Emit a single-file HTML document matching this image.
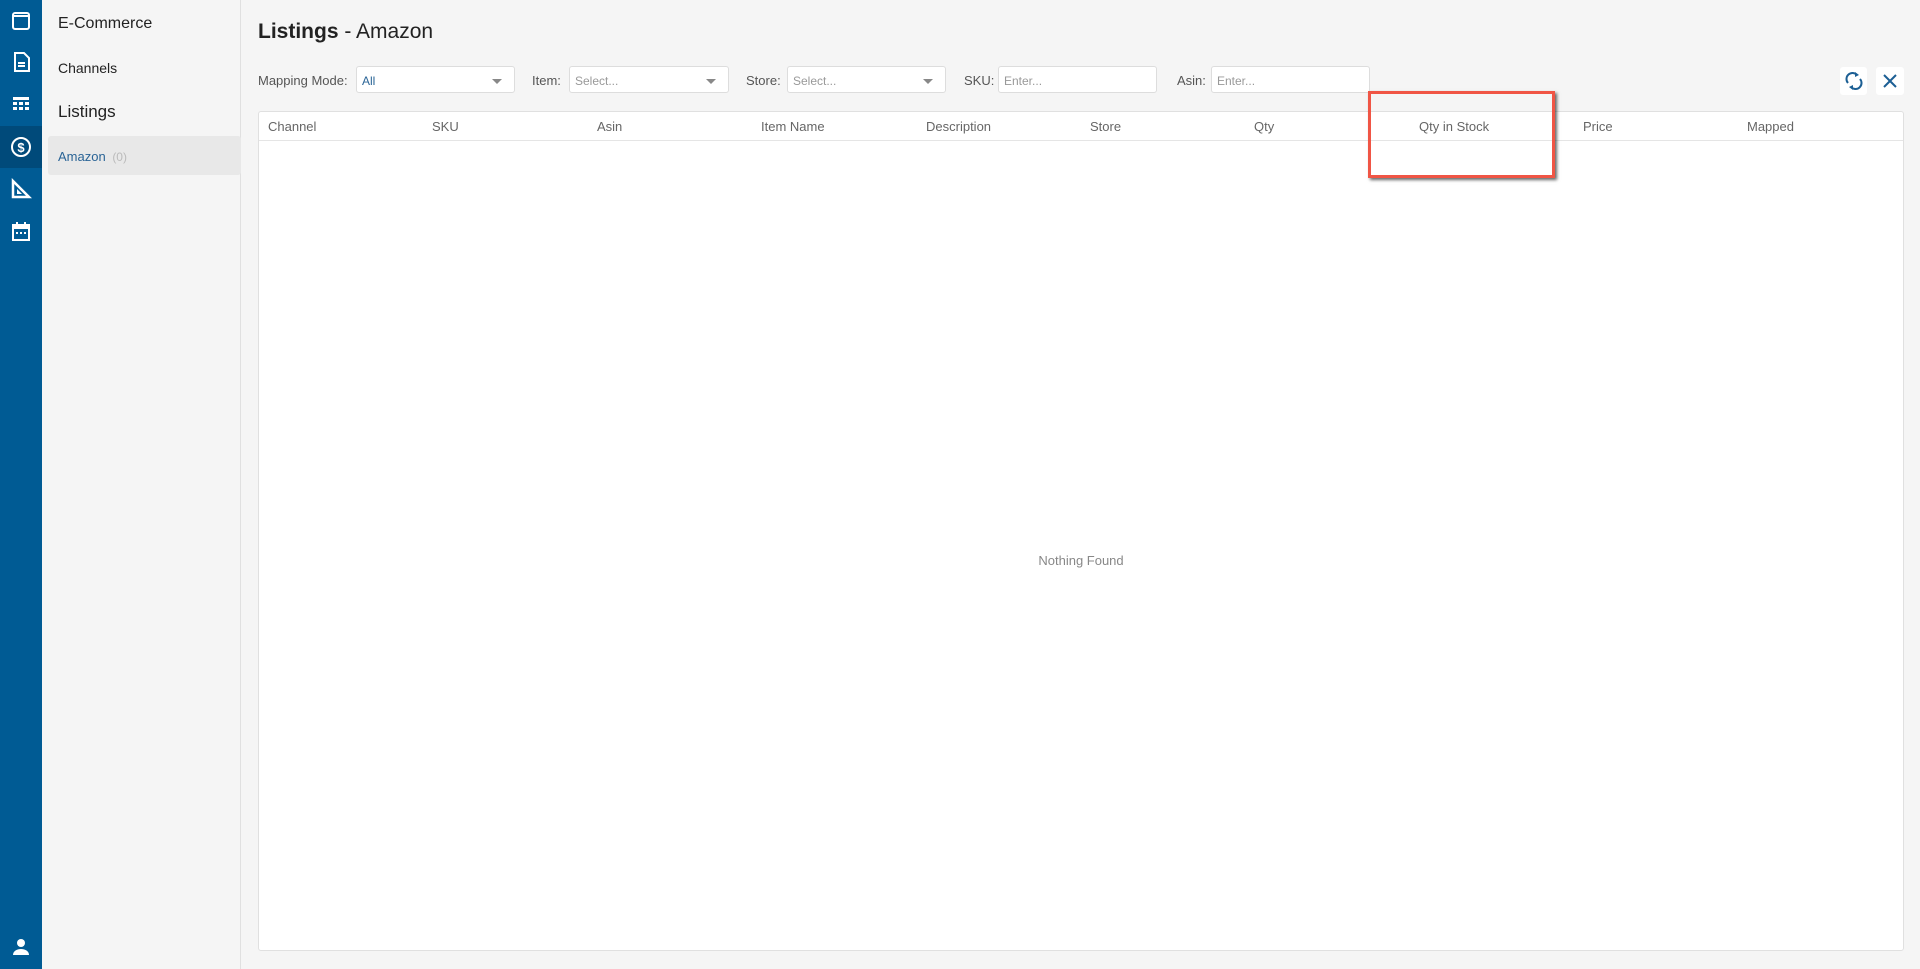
<!DOCTYPE html>
<html><head><meta charset="utf-8"><style>
*{box-sizing:border-box;margin:0;padding:0}
body{width:1920px;height:969px;background:#f5f5f5;font-family:"Liberation Sans",sans-serif;position:relative;overflow:hidden;color:#222}
.abs{position:absolute}
.bar{left:0;top:0;width:42px;height:969px;background:#005b94}
.act{left:0;top:126px;width:42px;height:42px;background:#004a7a}
.ico{position:absolute;left:10px;width:22px;height:22px}
.panel{left:42px;top:0;width:199px;height:969px;background:#f5f5f5;border-right:1px solid #e0e0e0}
.lbl{font-size:13px;color:#555}
.sel{background:#fff;border:1px solid #ddd;border-radius:3px;height:27px;top:66px;font-size:12px;padding:7px 5px;color:#999}
.sel .car{position:absolute;right:12px;top:12px;border-left:5px solid transparent;border-right:5px solid transparent;border-top:5px solid #888}
.th{position:absolute;top:7px;font-size:13px;color:#666}
</style></head><body>
<div class="abs bar"></div>
<div class="abs act"></div>
<svg class="ico" style="top:10px" viewBox="0 0 22 22"><rect x="3" y="3" width="16" height="16" rx="2" fill="none" stroke="#fff" stroke-width="2"/><line x1="3" y1="6" x2="19" y2="6" stroke="#fff" stroke-width="2"/></svg>
<svg class="ico" style="top:51px" viewBox="0 0 22 22"><path d="M5 2h9l5 5v13H5z" fill="none" stroke="#fff" stroke-width="2"/><path d="M8 12h7M8 15h7" stroke="#fff" stroke-width="2"/></svg>
<svg class="ico" style="top:93px" viewBox="0 0 22 22"><g fill="#fff"><rect x="3" y="4" width="16" height="3"/><rect x="3" y="9" width="4" height="3"/><rect x="9" y="9" width="4" height="3"/><rect x="15" y="9" width="4" height="3"/><rect x="3" y="14" width="4" height="3"/><rect x="9" y="14" width="4" height="3"/><rect x="15" y="14" width="4" height="3"/></g></svg>
<svg class="ico" style="top:136px" viewBox="0 0 22 22"><circle cx="11" cy="11" r="9" fill="none" stroke="#fff" stroke-width="2"/><text x="11" y="16" font-size="13" font-weight="bold" fill="#fff" text-anchor="middle" font-family="Liberation Sans">$</text></svg>
<svg class="ico" style="top:178px" viewBox="0 0 22 22"><path d="M3 3v16h16z" fill="none" stroke="#fff" stroke-width="2.5"/><path d="M7 11v5h5z" fill="#fff"/></svg>
<svg class="ico" style="top:220px" viewBox="0 0 22 22"><rect x="3" y="5" width="16" height="15" fill="none" stroke="#fff" stroke-width="2"/><rect x="3" y="5" width="16" height="4" fill="#fff"/><path d="M7 2v4M15 2v4" stroke="#fff" stroke-width="2"/><g fill="#fff"><rect x="6" y="12" width="2" height="2"/><rect x="10" y="12" width="2" height="2"/><rect x="14" y="12" width="2" height="2"/></g></svg>
<svg class="ico" style="top:936px" viewBox="0 0 22 22"><circle cx="11" cy="7" r="4" fill="#fff"/><path d="M3 19c0-4 4-6 8-6s8 2 8 6z" fill="#fff"/></svg>

<div class="abs panel"></div>
<div class="abs" style="left:58px;top:15px;font-size:16px">E-Commerce</div>
<div class="abs" style="left:58px;top:60px;font-size:14px">Channels</div>
<div class="abs" style="left:58px;top:102px;font-size:17px">Listings</div>
<div class="abs" style="left:48px;top:136px;width:193px;height:39px;background:#e8e8e8;border-radius:3px"></div>
<div class="abs" style="left:58px;top:149px;font-size:13px;color:#2a6496">Amazon <span style="color:#bbb;font-size:12px;margin-left:3px">(0)</span></div>

<div class="abs" style="left:258px;top:20px;font-size:21px"><b>Listings</b> - Amazon</div>

<div class="abs lbl" style="left:258px;top:73px">Mapping Mode:</div>
<div class="abs sel" style="left:356px;width:159px;color:#2a6496">All<span class="car"></span></div>
<div class="abs lbl" style="left:532px;top:73px">Item:</div>
<div class="abs sel" style="left:569px;width:160px">Select...<span class="car"></span></div>
<div class="abs lbl" style="left:746px;top:73px">Store:</div>
<div class="abs sel" style="left:787px;width:159px">Select...<span class="car"></span></div>
<div class="abs lbl" style="left:964px;top:73px">SKU:</div>
<div class="abs sel" style="left:998px;width:159px">Enter...</div>
<div class="abs lbl" style="left:1177px;top:73px">Asin:</div>
<div class="abs sel" style="left:1211px;width:159px">Enter...</div>

<div class="abs" style="left:1840px;top:67px;width:27px;height:28px;background:#fff;border-radius:3px"></div>
<svg class="abs" style="left:1843px;top:70px" width="22" height="22" viewBox="0 0 22 22"><path d="M5 13a6 6 0 0 1 9-8" fill="none" stroke="#1c5f94" stroke-width="2"/><path d="M12 2l4 3-4 2z" fill="#1c5f94"/><path d="M17 9a6 6 0 0 1-9 8" fill="none" stroke="#1c5f94" stroke-width="2"/><path d="M10 20l-4-3 4-2z" fill="#1c5f94"/></svg>
<div class="abs" style="left:1876px;top:67px;width:28px;height:28px;background:#fff;border-radius:3px"></div>
<svg class="abs" style="left:1883px;top:74px" width="14" height="14" viewBox="0 0 14 14"><path d="M1 1l12 12M13 1L1 13" stroke="#1c5f94" stroke-width="2"/></svg>

<div class="abs" style="left:258px;top:111px;width:1646px;height:840px;background:#fff;border:1px solid #e0e0e0;border-radius:3px">
<div style="position:absolute;left:0;top:28px;width:100%;border-top:1px solid #e5e5e5"></div>
<div class="th" style="left:9px">Channel</div>
<div class="th" style="left:173px">SKU</div>
<div class="th" style="left:338px">Asin</div>
<div class="th" style="left:502px">Item Name</div>
<div class="th" style="left:667px">Description</div>
<div class="th" style="left:831px">Store</div>
<div class="th" style="left:995px">Qty</div>
<div class="th" style="left:1160px">Qty in Stock</div>
<div class="th" style="left:1324px">Price</div>
<div class="th" style="left:1488px">Mapped</div>
<div style="position:absolute;left:0;width:100%;top:441px;text-align:center;font-size:13px;color:#888">Nothing Found</div>
</div>

<div class="abs" style="left:1368px;top:91px;width:187px;height:87px;border:3px solid #f05545;box-shadow:2px 2px 3px rgba(0,0,0,.6)"></div>
</body></html>
